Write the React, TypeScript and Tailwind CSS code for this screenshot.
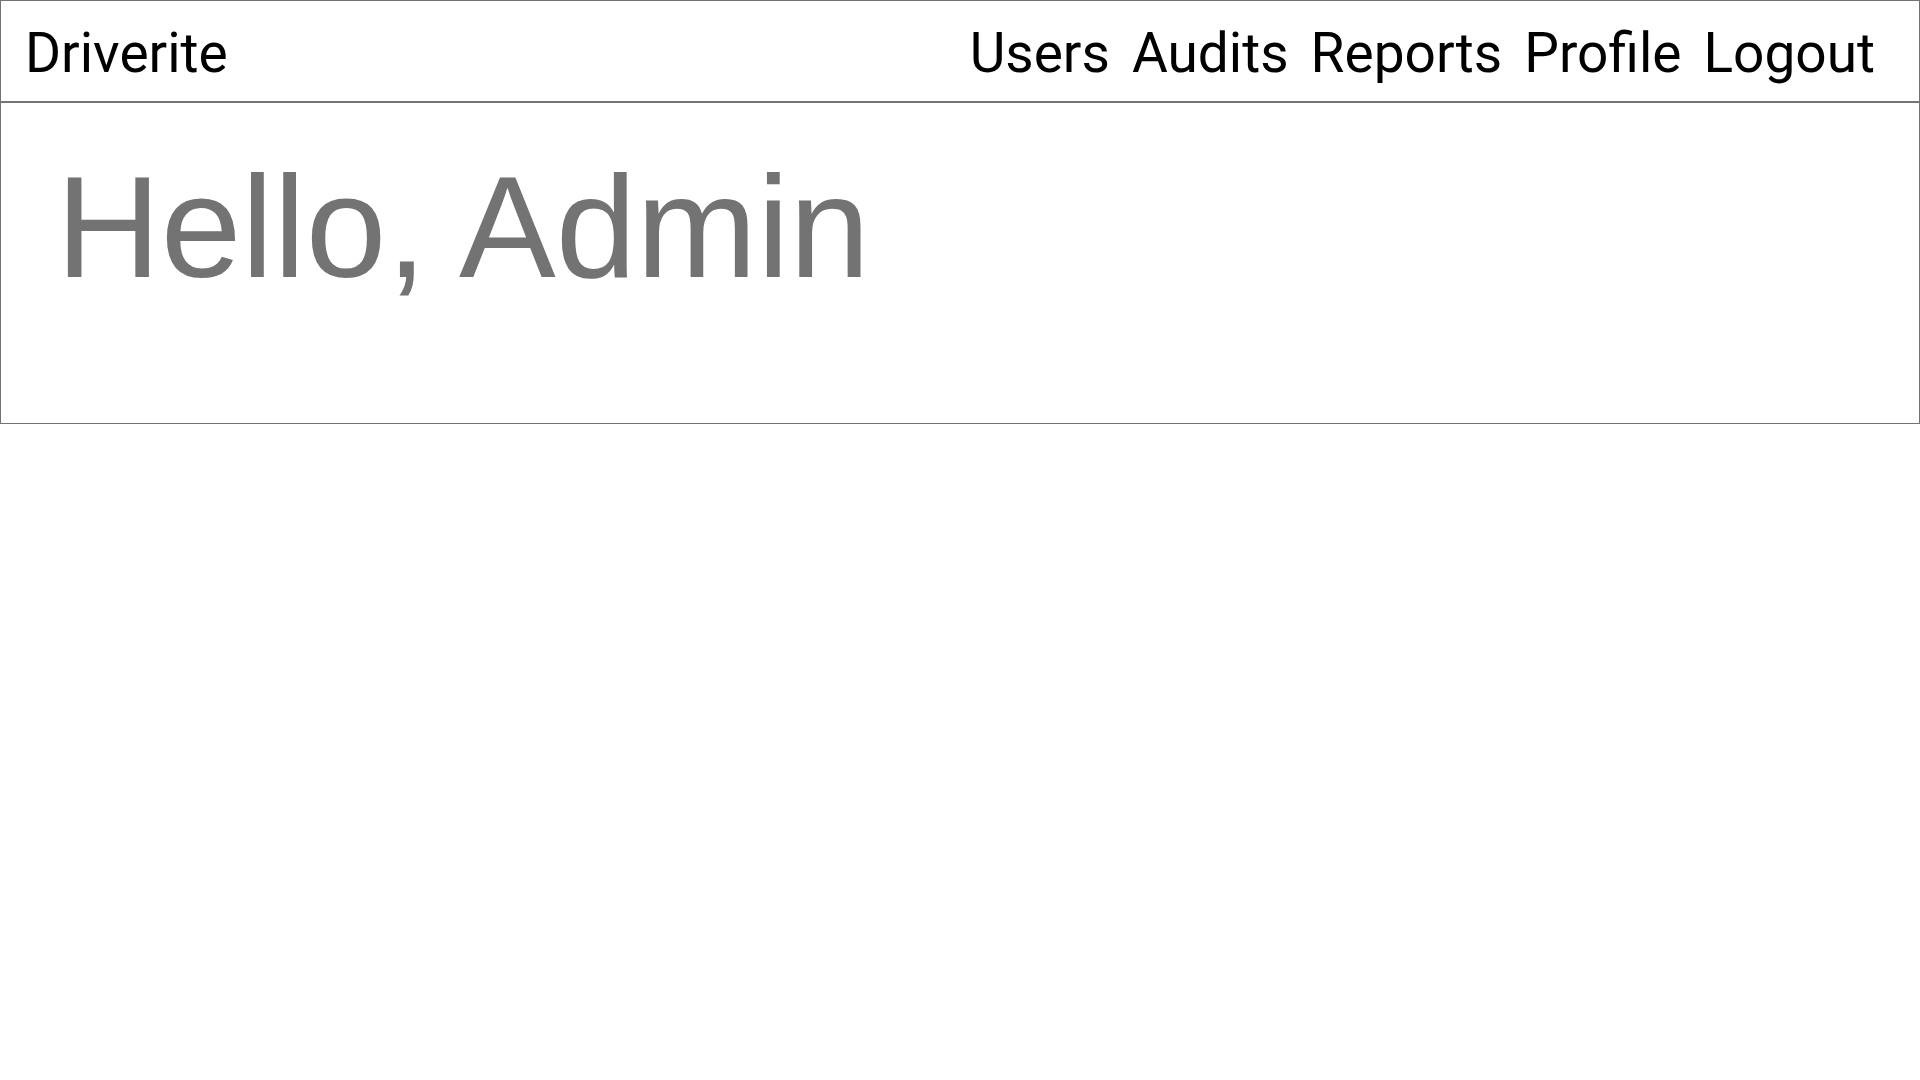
export default function App() {
  const nav = ["Users", "Audits", "Reports", "Profile", "Logout"];
  return (
    <div className="w-[1920px] bg-white">
      <header className="flex h-[102px] items-start justify-between border border-[#737373] pl-[24px] pr-[44px] pt-[11px] font-['Roboto',sans-serif] text-[55px] leading-normal text-black">
        <div>Driverite</div>
        <nav className="flex gap-[22px]">
          {nav.map((n) => (
            <a key={n} href="#" className="text-black no-underline">
              {n}
            </a>
          ))}
        </nav>
      </header>
      <main className="h-[322px] border-x border-b border-t border-[#737373] pl-[55px] pt-[52px]">
        <h1 className="font-['Liberation_Sans',Arial,sans-serif] text-[145px] leading-none font-normal text-[#737373]">
          Hello, Admin
        </h1>
      </main>
    </div>
  );
}
